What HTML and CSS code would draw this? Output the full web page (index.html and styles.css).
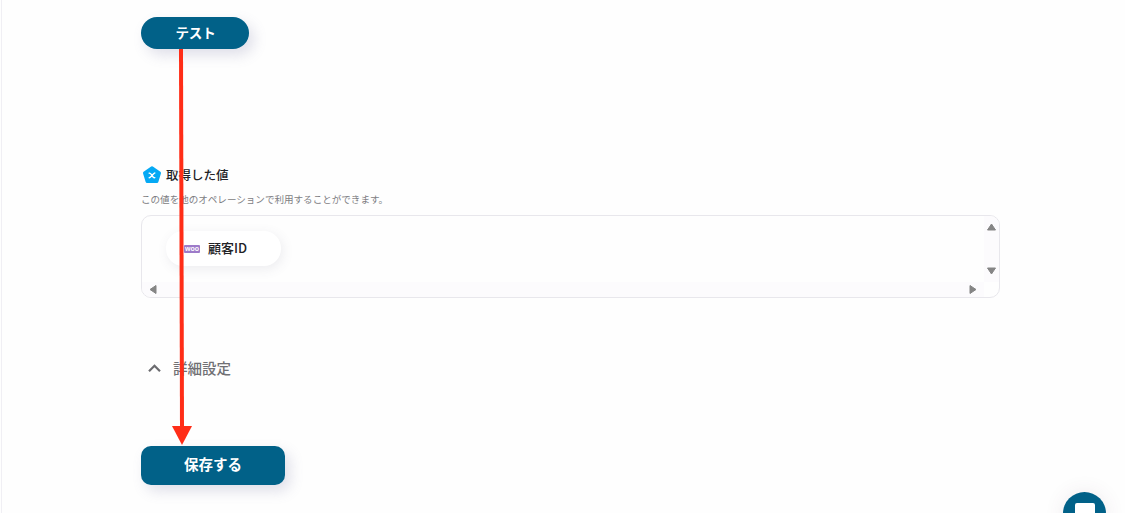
FILE: index.html
```html
<!DOCTYPE html>
<html lang="ja">

<head>
    <meta charset="UTF-8">
    <meta name="viewport" content="width=device-width, initial-scale=1.0">
    <title>オペレーション設定</title>
    <link rel="stylesheet" href="styles.css">
</head>

<body>

<main class="panel">
    <button class="button button-test" type="button">テスト</button>

    <!-- 取得した値 -->
    <section class="output">
        <h2 class="output-title">
            <svg class="output-icon" width="20" height="20" viewBox="0 0 20 20">
                <path d="M10 3.6 L17.6 9 L15 17.6 H5 L2.4 9 Z" fill="#05a9f4" stroke="#05a9f4" stroke-width="2.8" stroke-linejoin="round"/>
                <path d="M7.2 9.2 C9.6 8 10.2 14.6 12.8 13.6 M12.8 9 C11.4 9 8.8 13.8 7.2 13.8" fill="none" stroke="#fff" stroke-width="1.4" stroke-linecap="round"/>
            </svg>
            取得した値
        </h2>
        <p class="output-text">この値を他のオペレーションで利用することができます。</p>
        <div class="output-box">
            <div class="output-list">
                <div class="chip"><span class="chip-logo">woo</span><span class="chip-label">顧客ID</span></div>
            </div>
            <div class="scroll-y">
                <svg width="11" height="8" viewBox="0 0 11 8"><path d="M5.5 1 L9.5 7 H1.5 Z"/></svg>
                <svg width="11" height="8" viewBox="0 0 11 8"><path d="M5.5 7 L9.5 1 H1.5 Z"/></svg>
            </div>
            <div class="scroll-x">
                <svg width="8" height="11" viewBox="0 0 8 11"><path d="M1 5.5 L7 1.5 V9.5 Z"/></svg>
                <svg width="8" height="11" viewBox="0 0 8 11"><path d="M7 5.5 L1 1.5 V9.5 Z"/></svg>
            </div>
        </div>
    </section>

    <!-- 詳細設定 -->
    <div class="detail">
        <svg width="13" height="11" viewBox="0 0 13 11"><path d="M1 9.2 L6.5 3.7 L12 9.2" fill="none" stroke="#6b6b6f" stroke-width="2.2"/></svg>
        詳細設定
    </div>

    <button class="button button-save" type="button">保存する</button>
</main>

<!-- テストから保存への矢印 -->
<svg class="arrow" width="20" height="396" viewBox="0 0 20 396">
    <path d="M9 0 L10 380" stroke="#ff2d17" stroke-width="4"/>
    <path d="M0 377 H20 L10 396 Z" fill="#ff2d17"/>
</svg>

<!-- チャット -->
<div class="chat">
    <svg width="20" height="22" viewBox="0 0 20 22"><path d="M2 0 H18 Q20 0 20 2 V22 L14 18 H2 Q0 18 0 16 V2 Q0 0 2 0 Z" fill="#fff"/></svg>
</div>

</body>

</html>
```

FILE: styles.css
```css
* {
    box-sizing: border-box;
}

body {
    margin: 0;
    height: 513px;
    overflow: hidden;
    background-color: #fefefe;
    color: #222226;
    font-family: "Noto Sans CJK JP", sans-serif;
}

.panel {
    display: flex;
    flex-direction: column;
    align-items: flex-start;
    height: 513px;
    margin-left: 1px;
    padding: 17px 125px 0 139px;
    border-left: 1px solid #f0eff4;
}

.button {
    padding: 0;
    border: 0;
    background-color: #016188;
    color: #fff;
    font-family: inherit;
    font-weight: 700;
    box-shadow: 5px 6px 14px rgba(100, 100, 150, 0.2);
}

.button-test {
    width: 108px;
    height: 32px;
    padding: 0 0 3px 1px;
    border-radius: 16px;
    font-size: 13.5px;
    letter-spacing: -0.2px;
}

.button-save {
    width: 144px;
    height: 39px;
    padding-bottom: 5px;
    border-radius: 10px;
    font-size: 14.5px;
}

.output {
    width: 859px;
    margin-top: 115px;
}

.output-title {
    display: flex;
    align-items: center;
    gap: 4px;
    height: 20px;
    margin: 0;
    padding-left: 1px;
    font-size: 12.5px;
    font-weight: 500;
}

.output-text {
    height: 16px;
    margin: 7px 0 8px;
    color: #7d7d82;
    font-size: 9.55px;
    line-height: 16px;
}

.output-box {
    display: grid;
    grid-template-columns: 1fr 15px;
    grid-template-rows: 1fr 15px;
    height: 83px;
    border: 1px solid #e8e7ec;
    border-radius: 10px;
    overflow: hidden;
}

.output-list {
    padding: 15px 24px;
}

.chip {
    display: flex;
    align-items: center;
    width: 115px;
    height: 35px;
    padding-left: 18px;
    border-radius: 17px;
    background-color: #fff;
    font-size: 13px;
    font-weight: 500;
    box-shadow: 2px 3px 12px rgba(80, 80, 110, 0.1);
}

.chip-logo {
    width: 16px;
    height: 8px;
    margin-right: 8px;
    border-radius: 1px;
    background-color: #9d7bc9;
    color: #fff;
    font-family: "Liberation Sans", Arial, sans-serif;
    font-size: 7px;
    font-weight: 700;
    line-height: 7px;
    text-align: center;
}

.chip-label {
    padding-bottom: 2px;
}

.scroll-y,
.scroll-x {
    display: flex;
    justify-content: space-between;
    align-items: center;
    background-color: #fcfbfd;
    fill: #858585;
    stroke: #858585;
    stroke-linejoin: round;
}

.scroll-y {
    flex-direction: column;
    padding: 7px 0;
}

.scroll-x {
    padding: 0 7px;
}

.detail {
    display: flex;
    align-items: center;
    gap: 12px;
    height: 24px;
    margin: 57px 0 67px;
    padding-left: 7px;
    color: #707074;
    font-size: 14.5px;
    font-weight: 500;
}

/* 画面の上に重ねる矢印 */
.arrow {
    position: absolute;
    top: 49px;
    left: 172px;
}

.chat {
    position: absolute;
    top: 492px;
    left: 1063px;
    display: flex;
    justify-content: center;
    width: 43px;
    height: 43px;
    padding-top: 11px;
    border-radius: 50%;
    background-color: #016188;
    box-shadow: 0 0 20px rgba(100, 60, 90, 0.1);
}
```
